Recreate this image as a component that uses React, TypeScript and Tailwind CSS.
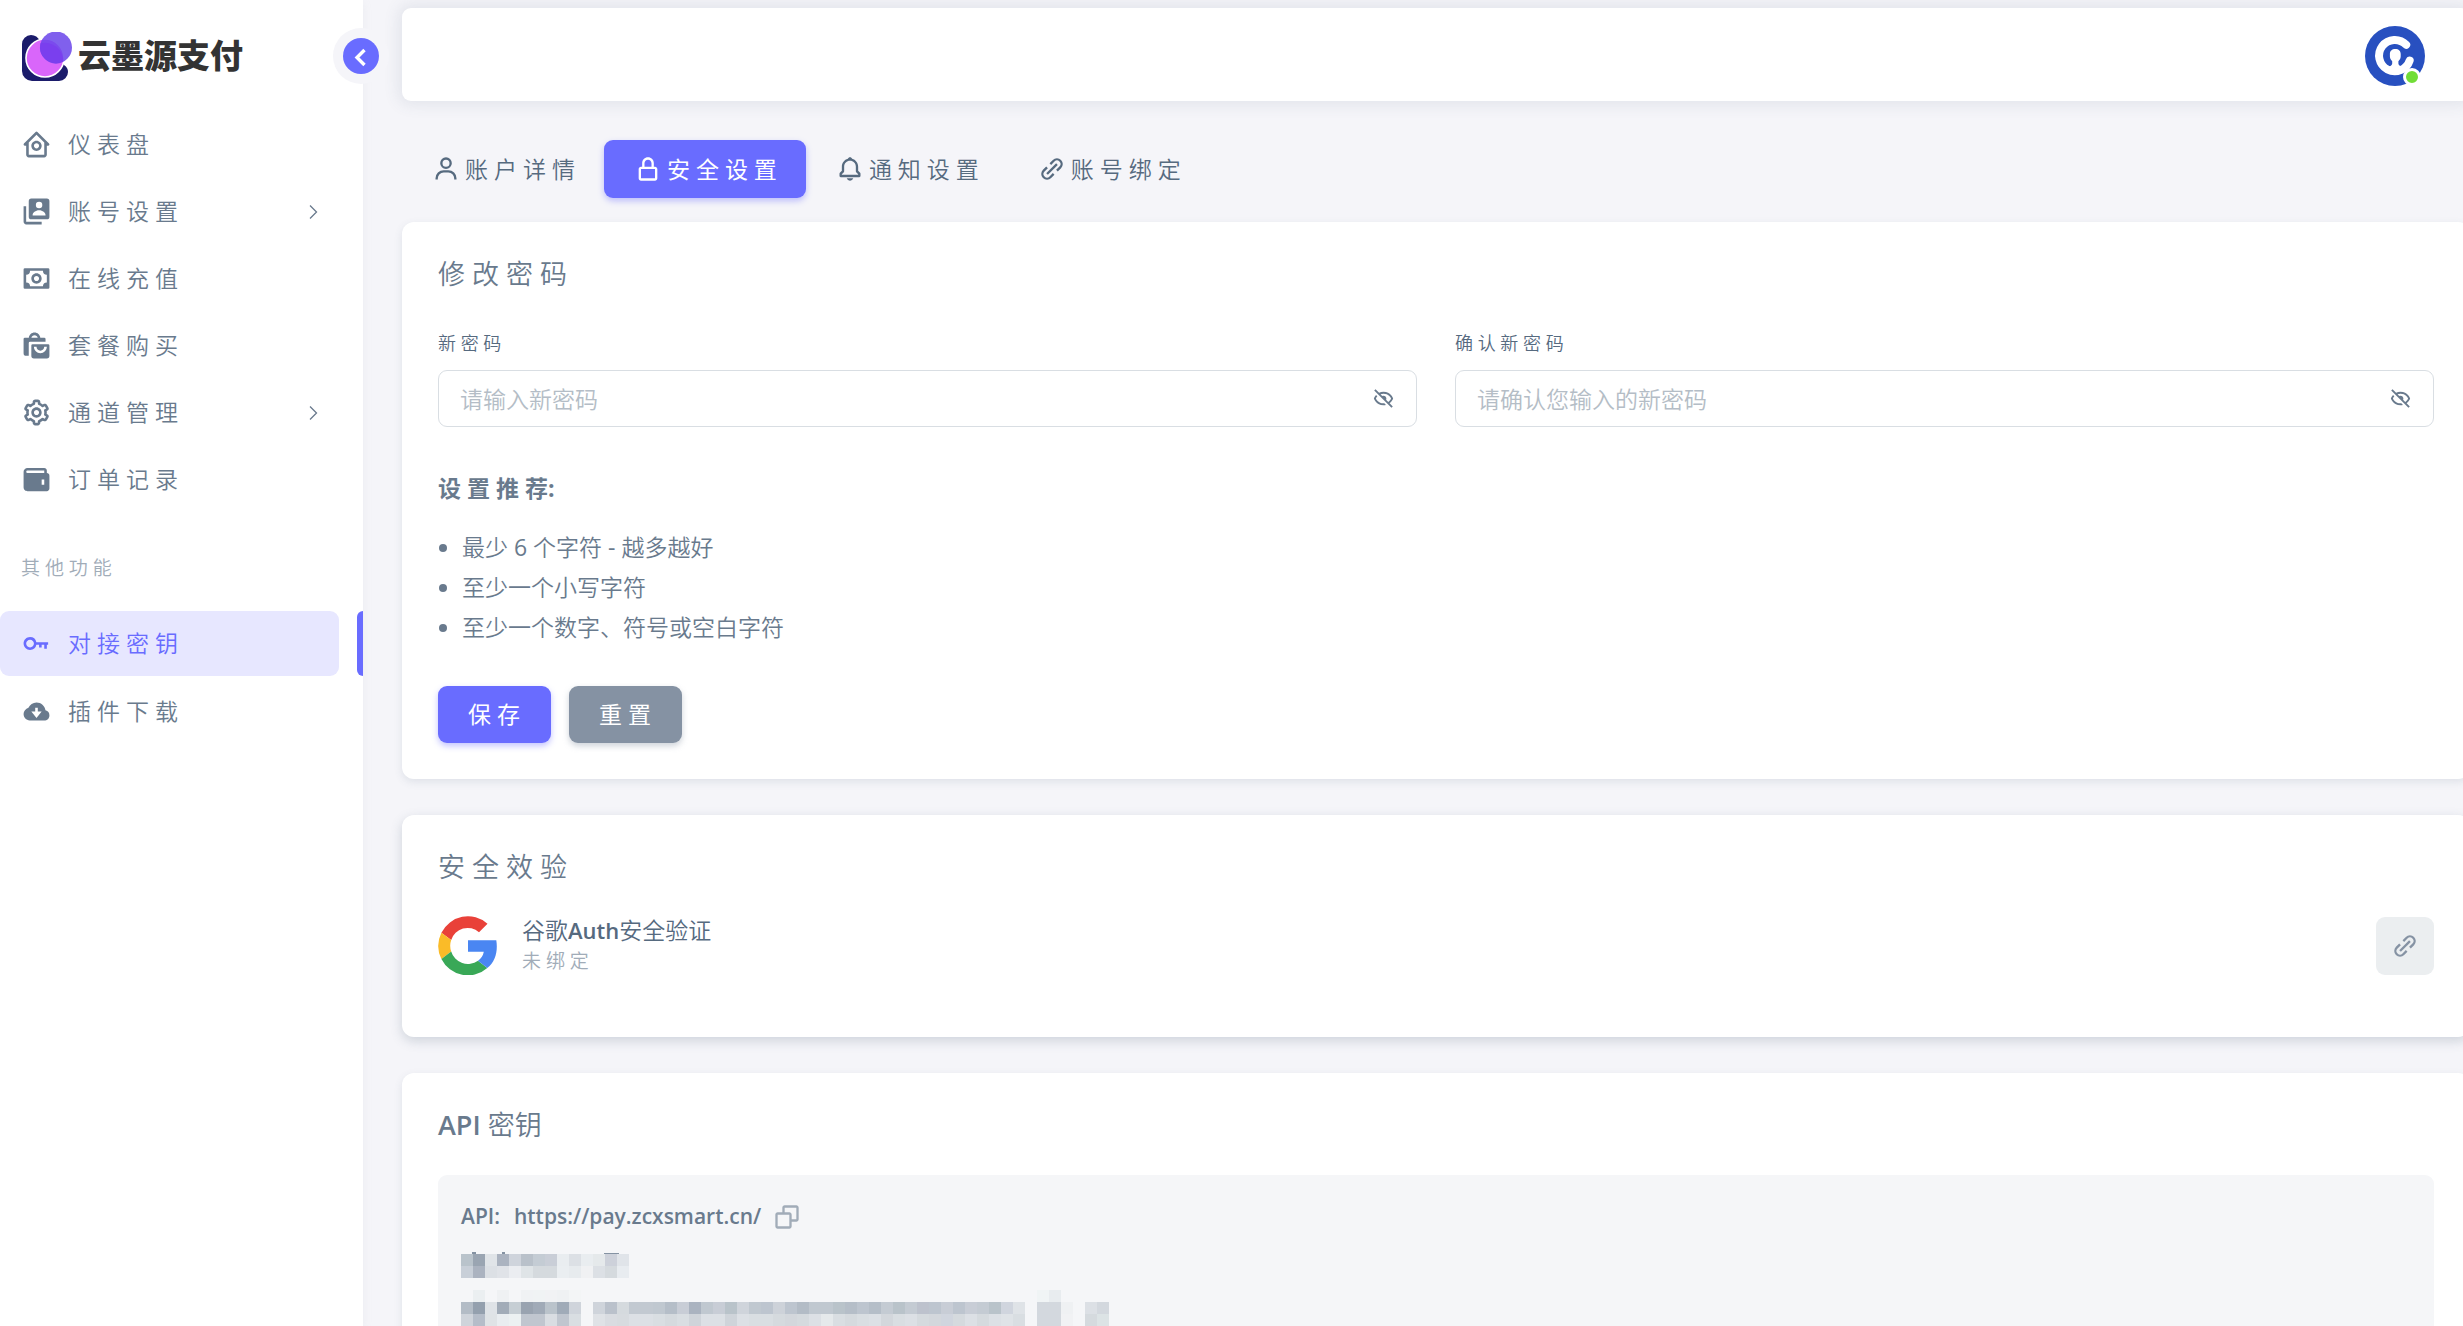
import { useState, type ReactNode } from "react";
import type { IconType } from "react-icons";
import {
  BiBell,
  BiCog,
  BiCopy,
  BiHide,
  BiHomeCircle,
  BiKey,
  BiLinkAlt,
  BiLockAlt,
  BiMoney,
  BiSolidCloudDownload,
  BiSolidShoppingBags,
  BiSolidUserAccount,
  BiSolidWallet,
  BiUser,
} from "react-icons/bi";

type MenuEntry = { label: string; icon: IconType; expandable?: boolean; active?: boolean };

const mainMenu: MenuEntry[] = [
  { label: "仪 表 盘", icon: BiHomeCircle },
  { label: "账 号 设 置", icon: BiSolidUserAccount, expandable: true },
  { label: "在 线 充 值", icon: BiMoney },
  { label: "套 餐 购 买", icon: BiSolidShoppingBags },
  { label: "通 道 管 理", icon: BiCog, expandable: true },
  { label: "订 单 记 录", icon: BiSolidWallet },
];

const otherMenu: MenuEntry[] = [
  { label: "对 接 密 钥", icon: BiKey, active: true },
  { label: "插 件 下 载", icon: BiSolidCloudDownload },
];

const tabs: MenuEntry[] = [
  { label: "账 户 详 情", icon: BiUser },
  { label: "安 全 设 置", icon: BiLockAlt, active: true },
  { label: "通 知 设 置", icon: BiBell },
  { label: "账 号 绑 定", icon: BiLinkAlt },
];

function LogoMark() {
  return (
    <svg viewBox="0 0 50 49" className="h-[49px] w-[50px] shrink-0" aria-hidden="true">
      <path d="M0 12a9 9 0 0 1 9-9c4 0 7 2 9 6l24 24c3 2 4 4 4 7a9 9 0 0 1-9 9H10A10 10 0 0 1 0 39z" fill="#1b1c6b" />
      <circle cx="23" cy="26" r="19" fill="#d966fa" stroke="#fff" strokeWidth="1.6" />
      <circle cx="34" cy="15.500" r="16" fill="#6b46ea" fillOpacity=".86" />
      <path d="M18.500 11.200A18.500 18.500 0 0 1 41.300 29.600A16 16 0 0 1 18.500 11.200z" fill="#7a3fee" />
    </svg>
  );
}

function MenuItem({ label, icon: Icon, expandable, active }: MenuEntry) {
  return (
    <li className="relative">
      <a
        href="#"
        className={
          "mr-6 flex h-[65px] items-center rounded-[9px] pl-[21px] pr-[18px] text-[23px] " +
          (active ? "bg-[#e7e7ff] text-[#696cff]" : "text-[#697a8d]")
        }
      >
        <Icon className="mr-4 size-[31px] shrink-0" />
        <span className="flex-1">{label}</span>
        {expandable && (
          <svg viewBox="0 0 16 16" className="size-4" fill="none" stroke="currentColor" strokeWidth="1.3" aria-hidden="true">
            <path d="M5 1.500l6.500 6.500L5 14.500" />
          </svg>
        )}
      </a>
      {active && <span className="absolute inset-y-0 right-0 w-1.5 rounded-l-md bg-[#696cff]" />}
    </li>
  );
}

function Sidebar() {
  return (
    <aside className="relative z-10 flex w-[363px] shrink-0 flex-col bg-white shadow-[0_3px_9px_rgba(161,172,184,0.12)]">
      <div className="flex h-28 items-center gap-1.5 pl-[22px]">
        <LogoMark />
        <span className="pb-1 font-['Noto_Sans_CJK_SC',sans-serif] text-[33px] font-black leading-10 text-[#333]">云墨源支付</span>
      </div>
      <button
        type="button"
        aria-label="收起菜单"
        className="absolute right-[-26px] top-7 flex size-14 items-center justify-center rounded-full bg-[#f5f5f9]"
      >
        <span className="flex size-9 items-center justify-center rounded-full bg-[#696cff]">
          <svg viewBox="0 0 24 24" className="size-6" fill="none" stroke="#fff" strokeWidth="3.400" aria-hidden="true">
            <path d="M15.500 6L8 13.500L15.500 21" />
          </svg>
        </span>
      </button>
      <nav>
        <ul className="flex flex-col gap-0.5">
          {mainMenu.map((m) => (
            <MenuItem key={m.label} {...m} />
          ))}
        </ul>
        <p className="mb-[34px] mt-12 pl-[21px] text-[19px] leading-[17px] text-[#a1acb8]">其 他 功 能</p>
        <ul className="flex flex-col gap-[3px]">
          {otherMenu.map((m) => (
            <MenuItem key={m.label} {...m} />
          ))}
        </ul>
      </nav>
    </aside>
  );
}

function Avatar() {
  return (
    <button type="button" aria-label="账户菜单" className="relative size-[60px] rounded-full">
      <svg viewBox="0 0 60 60" className="size-[60px]" aria-hidden="true">
        <circle cx="30" cy="30" r="30" fill="#2850c0" />
        <path d="M41.200 18.800A15.700 15.700 0 1 0 44.700 34.500" fill="none" stroke="#fff" strokeWidth="8" strokeLinecap="round" />
        <path
          d="M30.300 23c3.400 0 5.400 2 5.400 5v2.500c0 2.500-1.200 3.500-2.300 4.700v2.300c0 1.500 1.400 2 2.700 3.200v2.500H24.500v-2.500c1.300-1.200 2.700-1.700 2.700-3.200v-2.300c-1.100-1.200-2.300-2.200-2.300-4.700V28c0-3 2-5 5.400-5z"
          fill="#fff"
        />
      </svg>
      <span className="absolute bottom-0 right-1 size-[18px] rounded-full border-3 border-white bg-[#71dd37]" />
    </button>
  );
}

function Card({ title, className, children }: { title: ReactNode; className?: string; children: ReactNode }) {
  return (
    <section className={"rounded-xl bg-white px-9 pt-9 " + (className ?? "shadow-[0_3px_9px_rgba(67,89,113,0.12)]")}>
      <h2 className="text-[27px] leading-8 text-[#697a8d]">{title}</h2>
      {children}
    </section>
  );
}

function PasswordField({ id, label, placeholder }: { id: string; label: string; placeholder: string }) {
  const [visible, setVisible] = useState(false);
  return (
    <div>
      <label htmlFor={id} className="block text-[18px] leading-7 text-[#566a7f]">
        {label}
      </label>
      <div className="mt-[13px] flex h-[57px] items-center rounded-[9px] border border-[#d9dee3] px-[21px]">
        <input
          id={id}
          type={visible ? "text" : "password"}
          placeholder={placeholder}
          className="h-full min-w-0 flex-1 bg-transparent text-[23px] text-[#697a8d] outline-none placeholder:text-[#b4bdc6]"
        />
        <button type="button" aria-label="显示密码" onClick={() => setVisible(!visible)}>
          <BiHide className="size-[23px] text-[#697a8d]" />
        </button>
      </div>
    </div>
  );
}

const mosaicRows: { y: number; cells: string[] }[] = [
  {
    y: 6,
    cells: ["#b9c3cb", "#9aa5b2", "#e0e4e8", "#abb3c0", "#cfd4dc", "#b9c1ca", "#c4ccd4", "#c9ced7", "#e9edf0", "#dce0e5", "#e9edf0", "#e5e9eb", "#cdd1da", "#e0e4e9"],
  },
  {
    y: 18,
    cells: ["#c8cfd8", "#abb3c0", "#dce0e5", "#e0e3e8", "#ebedf1", "#dfe4e7", "#d5dade", "#d5dade", "#eaeef1", "#e7ebee", "#f0f1f3", "#dce0e5", "#d5dade", "#e8ecf0"],
  },
  {
    y: 42,
    cells: ["", "#ebeff1", "", "#eff1f3", "", "#f0f2f4", "#f0f3f4", "#f1f2f4", "#eff1f3", "#f3f5f6", ...Array<string>(38).fill(""), "#f0f4f5", "#e8ecef"],
  },
  {
    y: 54,
    cells: [
      "#b3bcc6", "#94a0ae", "#dfe3e7", "#a2acb8", "#c6ced4", "#99a3b0", "#a0aab7", "#bac3cb", "#a0abb8", "#cfd4db", "", "#cfd4db",
      "#bac1cb", "#d5dade", "#c2c9d1", "#c2c9d1", "#c0c8d0", "#b5bec8", "#c8cdd6", "#aab3c0", "#c0c8d0", "#c8cdd6", "#b9c3ca", "#cfd4db",
      "#c0c8d0", "#bdc5cf", "#cdd2d9", "#bdc5cf", "#b3bcc6", "#c0c8d0", "#c0c8d0", "#b9c3ca", "#b5bec8", "#bdc5cf", "#b5bec8", "#c4cbd3",
      "#b9c3ca", "#c4cbd3", "#bdc2cd", "#bdc5cf", "#c8cdd6", "#bdc5cf", "#c8cdd6", "#c4cbd3", "#b9c3ca", "#d0d5de", "#dfe3e7", "",
      "#d3d8de", "#d3d8de", "#eff1f3", "", "#dce0e5", "#d3d8de",
    ],
  },
  {
    y: 66,
    cells: [
      "#cfd4db", "#b5bdc9", "#dfe3e6", "#e9edf0", "#ecf1f2", "#c0c6cf", "#c0c6cf", "#d9dde2", "#c0c6cf", "#d9dee2", "", "#dfe2e6",
      "#d9dce1", "#d7dbdf", "#dce0e5", "#dce0e5", "#d9dee2", "#d5dade", "#d9dee2", "#cfd4da", "#dce0e5", "#dce0e5", "#cfd4da", "#dce0e5",
      "#d9dee2", "#d9dee2", "#d5dade", "#d3d7dc", "#d5dade", "#dce0e5", "#e5e9eb", "#d9dee2", "#d5dade", "#d9dee2", "#dce0e5", "#d3d7dc",
      "#d9dee2", "#dce0e5", "#d5dade", "#d3d7dc", "#d0d5de", "#d5dade", "#dce0e5", "#d5dade", "#dce0e5", "#dfe3e7", "#d9dee2", "",
      "#d3d8de", "#d3d8de", "#f1f2f4", "", "#d5dade", "#dce3e5",
    ],
  },
];

function MaskedLines() {
  return (
    <svg viewBox="0 0 660 78" className="h-[78px] w-[660px]" role="img" aria-label="已隐藏">
      <g fill="#697a8d" opacity=".8">
        <rect x="11" y="4" width="4" height="2" />
        <rect x="41" y="4" width="3" height="2" />
        <rect x="143" y="5" width="15" height="1" />
      </g>
      {mosaicRows.map((row) =>
        row.cells.map((fill, i) => fill && <rect key={row.y + "-" + i} x={i * 12} y={row.y} width="12" height="12" fill={fill} />),
      )}
    </svg>
  );
}

export default function App() {
  return (
    <div className="flex h-screen overflow-hidden bg-[#f5f5f9] font-['Open_Sans','Noto_Sans_CJK_SC',sans-serif] font-[350] text-[#697a8d]">
      <Sidebar />
      <main className="-mr-[7px] flex min-w-0 flex-1 flex-col pl-[39px] pt-2">
        <header className="flex h-[93px] shrink-0 items-center justify-end rounded-[9px] bg-white pr-[45px] pt-0.5 shadow-[0_0_15px_4px_rgba(67,89,113,0.1)]">
          <Avatar />
        </header>

        <div className="mt-[39px] flex" role="tablist">
          {tabs.map(({ label, icon: Icon, active }) => (
            <button
              key={label}
              type="button"
              role="tab"
              aria-selected={!!active}
              className={
                "flex h-[58px] items-center gap-[5px] rounded-[9px] pl-[30px] pr-[29px] text-[23px] " +
                (active ? "bg-[#696cff] font-normal text-white shadow-[0_3px_6px_rgba(105,108,255,0.4)]" : "text-[#566a7f]")
              }
            >
              <Icon className="size-7 shrink-0" />
              {label}
            </button>
          ))}
        </div>

        <div className="mt-6 flex flex-col gap-9">
          <Card title="修 改 密 码">
            <form onSubmit={(e) => e.preventDefault()} className="pb-9">
              <div className="mt-[39px] grid grid-cols-2 gap-[38px]">
                <PasswordField id="new-password" label="新 密 码" placeholder="请输入新密码" />
                <PasswordField id="confirm-password" label="确 认 新 密 码" placeholder="请确认您输入的新密码" />
              </div>
              <p className="mt-[45px] text-[23px] font-bold leading-8">设 置 推 荐:</p>
              <ul className="mt-[23px] list-disc pl-6 text-[23px] leading-10">
                <li>
                  最少 <span className="font-normal">6</span> 个字符 <span className="font-normal">-</span> 越多越好
                </li>
                <li>至少一个小写字符</li>
                <li>至少一个数字、符号或空白字符</li>
              </ul>
              <div className="mt-[39px] flex gap-[18px] text-[23px] text-white">
                <button type="submit" className="h-[57px] rounded-[9px] bg-[#696cff] pl-[30px] pr-[31px] font-normal shadow-[0_3px_6px_rgba(105,108,255,0.4)]">
                  保 存
                </button>
                <button type="reset" className="h-[57px] rounded-[9px] bg-[#8592a3] pl-[30px] pr-[31px] font-normal shadow-[0_3px_6px_rgba(133,146,163,0.4)]">
                  重 置
                </button>
              </div>
            </form>
          </Card>

          <Card title="安 全 效 验" className="pb-[61px] shadow-[0_4px_12px_rgba(67,89,113,0.22)]">
            <div className="mt-8 flex items-center">
              <svg viewBox="0 0 59 59" className="size-[59px]" aria-hidden="true">
                <path d="M49.500 7.800L41 16.200A17.200 17.200 0 0 0 13.200 24L3.400 16.800A29.500 29.500 0 0 1 49.500 7.800z" fill="#e94139" />
                <path d="M3.400 16.800L13.200 24A17.500 17.500 0 0 0 13.200 35.500L3.400 43A29.500 29.500 0 0 1 3.400 16.800z" fill="#fabb28" />
                <path d="M3.400 43L13.200 35.500A17.400 17.400 0 0 0 40 44.800L49.300 52A29.500 29.500 0 0 1 3.400 43z" fill="#39a857" />
                <path d="M30 24.200H58.300C60 35 57.500 45.500 49.300 52L40 44.800C43 42.700 45 40 45.800 35.800H30z" fill="#4a86f2" />
              </svg>
              <div className="ml-[25px] flex-1">
                <h3 className="text-[23px] leading-[31px] text-[#566a7f]">
                  谷歌<span className="text-[22px] font-semibold">Auth</span>安全验证
                </h3>
                <p className="text-[19px] leading-[30px] text-[#a1acb8]">未 绑 定</p>
              </div>
              <button type="button" aria-label="绑定" className="flex size-[58px] items-center justify-center rounded-[9px] bg-[#ebeef0] text-[#8592a3]">
                <BiLinkAlt className="size-7" />
              </button>
            </div>
          </Card>

          <Card title={<><span className="font-semibold">API</span> 密钥</>}>
            <div className="mt-[34px] min-h-[200px] rounded-[9px] bg-[#f5f6f8] pl-[23px] pt-[26px]">
              <div className="flex h-8 items-center text-[21px] font-semibold">
                <span className="mr-3.5">API:</span>
                <span className="mr-3">https://pay.zcxsmart.cn/</span>
                <button type="button" aria-label="复制" className="text-[#a1acb8]">
                  <BiCopy className="size-7" />
                </button>
              </div>
              <div className="mt-[15px]">
                <MaskedLines />
              </div>
            </div>
          </Card>
        </div>
      </main>
    </div>
  );
}
